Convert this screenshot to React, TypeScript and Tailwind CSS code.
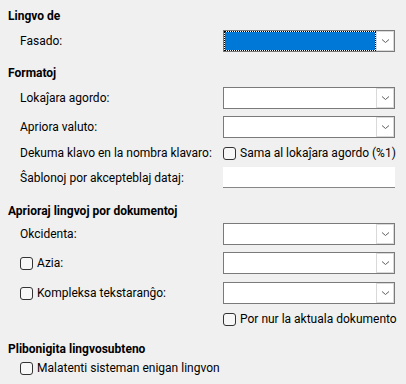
import * as React from "react";

function Chevron() {
  return (
    <svg width="9" height="6" viewBox="0 0 9 6" className="block">
      <path d="M1 1.5 L4.5 4.5 L8 1.5" fill="none" stroke="#606060" strokeWidth="1" />
    </svg>
  );
}

function Combo({ focused = false }: { focused?: boolean }) {
  return (
    <div className="flex w-[172px] h-[22px] border border-[#7a7a7a] bg-white">
      {focused ? (
        <div className="flex-1 m-px bg-[#0078d7] outline outline-1 outline-dotted outline-black" />
      ) : (
        <div className="flex-1" />
      )}
      <div className="w-[18px] h-full border border-[#d9d9d9] bg-white flex items-center justify-center">
        <Chevron />
      </div>
    </div>
  );
}

function Check({ label }: { label: string }) {
  return (
    <div className="flex items-center gap-[4px] h-[16px] whitespace-nowrap">
      <span className="w-[13px] h-[13px] rounded-[3px] border border-[#333] bg-[#f7f7f7] shrink-0" />
      <span>{label}</span>
    </div>
  );
}

function Heading({ children, className = "" }: { children: React.ReactNode; className?: string }) {
  return <div className={`h-[16px] leading-[16px] pl-[8px] font-bold ${className}`}>{children}</div>;
}

function Row({
  label,
  children,
  className = "",
}: {
  label: React.ReactNode;
  children: React.ReactNode;
  className?: string;
}) {
  return (
    <div className={`flex items-center pl-[20px] ${className}`}>
      <div className="w-[203px] shrink-0 whitespace-nowrap">{label}</div>
      {children}
    </div>
  );
}

export default function App() {
  return (
    <div
      className="w-[406px] h-[384px] bg-[#f0f0f0] text-[12px] leading-[16px] text-black pt-[8px] overflow-hidden"
      style={{ fontFamily: 'Roboto, "Noto Sans", sans-serif' }}
    >
      <Heading>Lingvo de</Heading>
      <Row label="Fasado:" className="mt-[6px]">
        <Combo focused />
      </Row>

      <Heading className="mt-[13px]">Formatoj</Heading>
      <Row label="Lokaĵara agordo:" className="mt-[6px]">
        <Combo />
      </Row>
      <Row label="Apriora valuto:" className="mt-[7px]">
        <Combo />
      </Row>
      <Row label="Dekuma klavo en la nombra klavaro:" className="mt-[7px] h-[16px]">
        <Check label="Sama al lokaĵara agordo (%1)" />
      </Row>
      <Row label="Ŝablonoj por akcepteblaj dataj:" className="mt-[6px]">
        <div className="w-[172px] h-[21px] bg-white border-b border-[#868686]" />
      </Row>

      <Heading className="mt-[15px]">Aprioraj lingvoj por dokumentoj</Heading>
      <Row label="Okcidenta:" className="mt-[4px]">
        <Combo />
      </Row>
      <Row label={<Check label="Azia:" />} className="mt-[7px]">
        <Combo />
      </Row>
      <Row label={<Check label="Kompleksa tekstaranĝo:" />} className="mt-[8px]">
        <Combo />
      </Row>
      <div className="mt-[7px] pl-[223px]">
        <Check label="Por nur la aktuala dokumento" />
      </div>

      <Heading className="mt-[14px]">Plibonigita lingvosubteno</Heading>
      <div className="mt-[3px] pl-[20px]">
        <Check label="Malatenti sisteman enigan lingvon" />
      </div>
    </div>
  );
}
